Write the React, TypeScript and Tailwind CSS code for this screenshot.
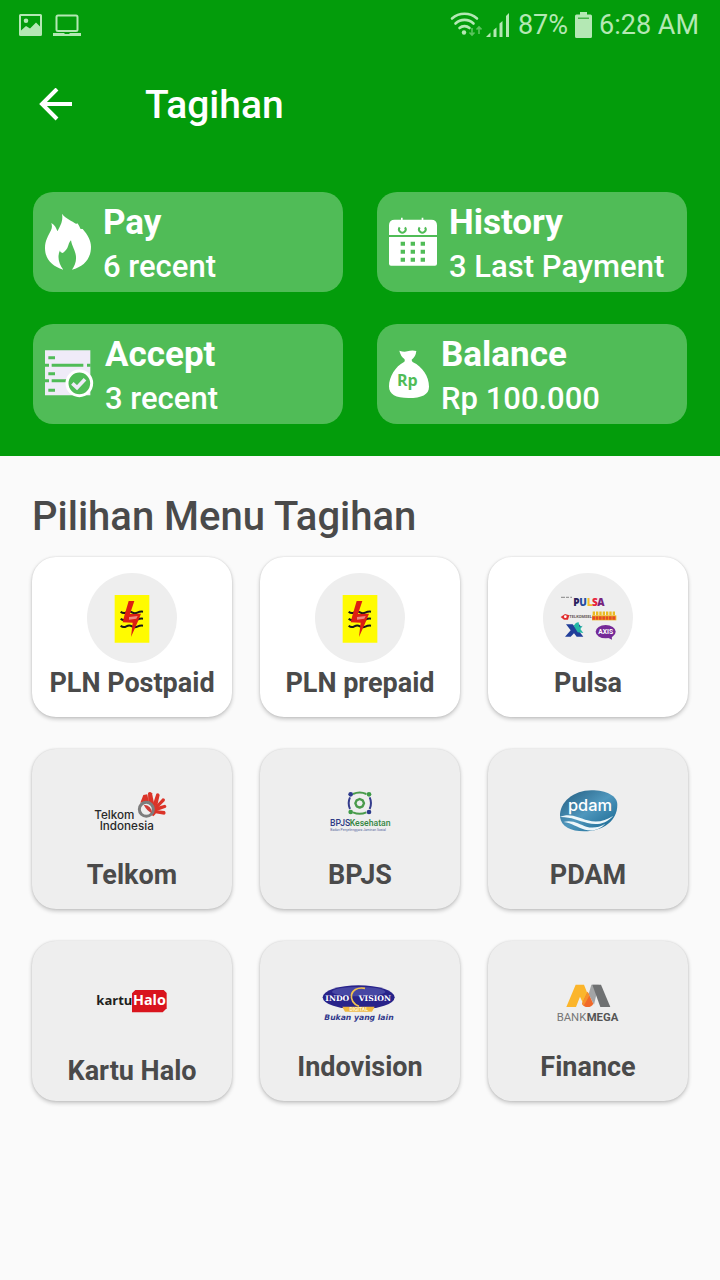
import type { ReactNode } from "react";

function StatusBar() {
  return (
    <div className="flex h-[50px] items-center justify-between pl-[18px] pr-[21px] text-[#b4e8b4]">
      <div className="flex items-center gap-[10px]">
        <svg className="h-[24px] w-[25px]" viewBox="0 0 25 24" aria-label="Image saved">
          <path
            fill="currentColor"
            fillRule="evenodd"
            d="M2.500 1h20a1.500 1.500 0 0 1 1.500 1.500v19a1.500 1.500 0 0 1-1.500 1.500h-20A1.500 1.500 0 0 1 1 21.500v-19A1.500 1.500 0 0 1 2.500 1ZM3 3v14.500l5-4.500 4 2.500 6-6 4 4V3ZM8 5.500a2.300 2.300 0 1 1 0 4.600 2.300 2.300 0 0 1 0-4.600Z"
          />
        </svg>
        <svg className="h-[24px] w-[28px]" viewBox="0 0 28 24" aria-label="Connected to computer">
          <rect x="3.500" y="2.500" width="21" height="15.500" rx="1.500" fill="none" stroke="currentColor" strokeWidth="2" />
          <path fill="currentColor" d="M0 20h11l1 1h4l1-1h11v3H0Z" />
        </svg>
      </div>
      <div className="flex items-center text-[27px] leading-8">
        <svg className="mr-[4px] h-[28px] w-[32px]" viewBox="0 0 32 28" aria-label="Wi-Fi">
          <g fill="none" stroke="currentColor" strokeWidth="2.600" strokeLinecap="round">
            <path d="M2 7.500a19 19 0 0 1 25 0" />
            <path d="M5.500 12.500a13 13 0 0 1 18 0" />
            <path d="M9.500 17a7.500 7.500 0 0 1 10 0" />
          </g>
          <circle cx="14" cy="21.500" r="2.200" fill="currentColor" />
          <g fill="none" stroke="#5cc45f" strokeWidth="1.600">
            <path d="M22 17v7m-2.500-2.500L22 24l2.500-2.500" />
            <path d="M29 23v-7m-2.500 2.500L29 16l2.500 2.500" />
          </g>
        </svg>
        <svg className="mr-[8px] h-[26px] w-[24px]" viewBox="0 0 24 26" aria-label="Signal" fill="currentColor">
          <path d="M0 25l4.500-4.500V25Z" />
          <path d="M7.500 18l3-2.500V25h-3Z" />
          <path d="M13.500 11.500l3-2.500v16h-3Z" />
          <path d="M20 4l3-3v24h-3Z" />
        </svg>
        <span>87%</span>
        <svg className="mx-[7px] h-[26px] w-[17px]" viewBox="0 0 17 26" aria-label="Battery">
          <path fill="currentColor" d="M5 0h7v2.500h3.500A1.500 1.500 0 0 1 17 4v20.500a1.500 1.500 0 0 1-1.500 1.500h-14A1.500 1.500 0 0 1 0 24.500V4a1.500 1.500 0 0 1 1.500-1.500H5Z" />
          <path fill="#45b549" d="M3 5.500h11V7H3Z" />
        </svg>
        <span>6:28 AM</span>
      </div>
    </div>
  );
}

const FireIcon = (
  <svg className="h-[58px] w-[48px] shrink-0" viewBox="0 0 144 174" fill="#fff" aria-hidden="true">
    <path d="M54 2c10 14 30 22 43 31 1-1 2-2 2-3 5 5 8 11 10 17 3 1 5 1 7 1 15 17 25 36 25 53 0 36-21 60-57 69 8-12 13-24 12-38-1-19-12-31-15-50-6 4-7 15-11 23-4 7-8 11-14 15-6-1-8-4-8-8-9 19-4 40 10 58C22 159 3 137 3 104c0-20 10-36 18-52 4-9 3-14 1-22 11 6 15 15 18 25 9-17 18-31 14-53Z" />
  </svg>
);

const CalendarIcon = (
  <svg className="h-[50px] w-[50px] shrink-0" viewBox="0 0 150 150" aria-hidden="true">
    <path fill="#fff" d="M20 8h19V2h5v6h57V2h5v6h24q17 0 17 17v29H3V25Q3 8 20 8ZM3 60h144v80q0 6-6 6H9q-6 0-6-6Z" />
    <g fill="none" stroke="#50bc57" strokeWidth="6">
      <path d="M35 31a10 10 0 1 0 16 0M95 31a10 10 0 1 0 16 0" />
    </g>
    <path
      fill="#50bc57"
      d="M38 74h13v12H38ZM68 74h13v12H68ZM98 74h13v12H98ZM38 98h13v12H38ZM68 98h13v12H68ZM98 98h13v12H98ZM38 122h13v12H38ZM68 122h13v12H68ZM98 122h13v12H98Z"
    />
  </svg>
);

const ChecklistIcon = (
  <svg className="h-[49px] w-[50px] shrink-0" viewBox="0 0 150 147" aria-hidden="true">
    <path fill="#efebf8" d="M3 1h136v135H3Z" />
    <g fill="#50bc57">
      <path d="M13 19h20v9H13ZM13 67h20v9H13ZM13 116h20v9H13Z" />
      <path d="M0 41h15v9H0ZM23 41h95v9H23ZM129 41h11v9h-11ZM0 88h15v9H0ZM23 88h52v9H23Z" />
    </g>
    <circle cx="106" cy="100" r="37" fill="#50bc57" stroke="#fff" strokeWidth="9" />
    <path fill="none" stroke="#efebf8" strokeWidth="11" d="m85 100 14 13 24-25" />
  </svg>
);

const MoneyBagIcon = (
  <svg className="h-[50px] w-[42px] shrink-0" viewBox="0 0 126 150" aria-hidden="true">
    <path fill="#fff" d="M34 5q14 5 24 2 14-4 27-1-2 18-14 26 0 5 4 8c28 13 48 42 48 73 0 24-22 34-61 34S3 137 3 112c0-28 19-60 45-73 3-2 3-6 1-9Q38 22 34 5Z" />
    <text x="58" y="112" textAnchor="middle" fill="#50bc57" className="font-[Open_Sans] text-[48px] font-bold">
      Rp
    </text>
  </svg>
);

const PlnLogo = (
  <svg className="size-[90px]" viewBox="0 0 270 270" aria-hidden="true">
    <circle cx="135" cy="135" r="135" fill="#eee" />
    <path fill="#fffb00" d="M83 66h104v143H83Z" />
    <g fill="none" stroke="#191919" strokeWidth="6">
      <path d="M101 116q8 7 17 2t17 0 16 1 17-3M101 137q8 7 17 2t17 0 16 1 17-3M101 158q8 7 17 2t17 0 16 1 17-3" />
    </g>
    <path fill="#dd1f12" d="M125 84h17l-13 39 33-1-11 27-19 43 5-43-30-1 5-20Z" />
    <path fill="#ee8a80" d="m126 132 26-3-4 8-22 3Z" />
  </svg>
);

const PulsaLogo = (
  <svg className="size-[90px]" viewBox="0 0 270 270" aria-hidden="true">
    <circle cx="135" cy="135" r="135" fill="#eee" />
    <path stroke="#9a9a9a" strokeWidth="4" strokeDasharray="12 3 9 4" d="M54 73h33" />
    <g className="font-[Open_Sans] text-[30px] font-extrabold">
      <text x="91" y="98" fill="#29205d">P</text>
      <text x="109" y="98" fill="#244c9d">U</text>
      <text x="132" y="98" fill="#f5bd2c">L</text>
      <text x="147" y="98" fill="#e8243a">S</text>
      <text x="163" y="98" fill="#76237d">A</text>
    </g>
    <path fill="#e02c2c" d="m53 132 13-9 13 4-4 13H63Z" />
    <circle cx="67" cy="131" r="4" fill="#fff" />
    <text x="79" y="136" fill="#665a5a" className="text-[12px] font-bold">TELKOMSEL</text>
    <path stroke="#ebbb23" strokeWidth="11" strokeDasharray="7 3" d="M149 121h70" />
    <path fill="#f0b51c" d="M147 127h73v15h-73Z" />
    <path stroke="#e44927" strokeWidth="11" strokeDasharray="8 2" d="M148 135h71" />
    <path fill="#213e9a" d="M69 154h20l9 10 10-10 7 8-9 10 15 19h-20l-8-10-10 10H66l17-19Z" />
    <path fill="#25b8a5" d="M92 158q8-12 15-10l2 13 10-3-7 10 9 12-17-2Z" />
    <ellipse cx="188" cy="176" rx="30" ry="20" fill="#752a98" />
    <path fill="#752a98" d="m192 193 15 7-1-15Z" />
    <text x="188" y="184" textAnchor="middle" fill="#fff" className="text-[20px] font-bold">AXIS</text>
  </svg>
);

const TelkomLogo = (
  <svg className="h-[60px] w-[95px]" viewBox="0 0 285 180" aria-hidden="true">
    <g fill="#db3328">
      <path d="M166 68l9-23 12-2 4 22Z" />
      <path d="M190 68 189 39q6-6 12 1l7 34Z" />
      <path d="m204 72 10-31q8-3 10 4l-8 35Z" />
      <path d="m212 77 21-22q9 0 6 8l-24 24Z" />
      <path d="m212 82 28-8q7 4 2 9l-29 11Z" />
      <path d="m208 90 31 3q6 7-1 11l-31-5Z" />
      <path d="M164 74q20-18 48 0 9 22-7 35Z" />
    </g>
    <circle cx="184" cy="88" r="21" fill="#eee" stroke="#7d7d7d" strokeWidth="9" />
    <path fill="#ce3c37" d="M176 74q25 2 24 25-14-6-24-25Z" />
    <text fill="#292929" className="font-[Inter] text-[35px] font-medium">
      <tspan x="28" y="117">Telkom</tspan>
      <tspan x="44" y="151">Indonesia</tspan>
    </text>
  </svg>
);

const BpjsLogo = (
  <svg className="h-[60px] w-[80px]" viewBox="0 0 240 180" aria-hidden="true">
    <g fill="none" strokeWidth="6">
      <path stroke="#4a9b4b" d="M99 42q20-9 40 0M99 97q20 9 40 0" />
      <path stroke="#343c8c" d="M90 52q-8 17 0 35M149 52q8 17 0 35" />
      <path stroke="#4a9b4b" strokeWidth="7" strokeLinejoin="round" d="m119 57 9 4 4 9-4 9-9 4-9-4-4-9 4-9Z" />
    </g>
    <g fill="#2d3a8b">
      <circle cx="92" cy="43" r="7" />
      <circle cx="147" cy="96" r="7" />
    </g>
    <g fill="#3f9b47">
      <circle cx="147" cy="43" r="7" />
      <circle cx="92" cy="96" r="7" />
    </g>
    <text x="30" y="138" fill="#2f3a85" className="text-[26px] font-medium">BPJS</text>
    <text x="89" y="138" fill="#338642" className="text-[26px] font-medium">Kesehatan</text>
    <text x="31" y="152" fill="#5768a0" className="text-[10px]">Badan Penyelenggara Jaminan Sosial</text>
  </svg>
);

const PdamLogo = (
  <svg className="h-[60px] w-[80px]" viewBox="-6 0 240 180" aria-hidden="true">
    <defs>
      <linearGradient id="water" x1="0" y1="0" x2="1" y2="1">
        <stop offset="0" stopColor="#225b7e" />
        <stop offset="0.500" stopColor="#4f97bd" />
        <stop offset="1" stopColor="#12628c" />
      </linearGradient>
    </defs>
    <path fill="url(#water)" d="M30 111C27 66 72 31 124 31c46 0 78 17 78 43 0 47-40 79-100 80-39 0-69-15-72-43Z" />
    <path fill="#eef7fa" d="M29 111c32-14 57 3 84 10 28 8 52 2 77-14-22 25-49 29-78 22-27-7-50-19-83-18Z" />
    <path fill="#edf6fa" d="M41 126c26-8 48 8 68 14 18 5 38 3 57-9-16 18-39 24-61 18-23-6-40-20-64-23Z" />
    <text x="54" y="93" fill="#fff" className="font-[Inter] text-[49px] font-medium">pdam</text>
  </svg>
);

const KartuHaloLogo = (
  <svg className="h-[58px] w-[95px]" viewBox="0 0 285 174" aria-hidden="true">
    <path fill="#d9141d" d="M151 45h85l9 9v46l-12 12h-92V55Z" />
    <text x="34" y="91" fill="#211f20" className="font-[Open_Sans] text-[39px] font-bold">kartu</text>
    <text x="144" y="91" fill="#fff" className="font-[Open_Sans] text-[43px] font-bold">Halo</text>
  </svg>
);

const IndovisionLogo = (
  <svg className="h-[55px] w-[90px]" viewBox="0 0 270 165" aria-hidden="true">
    <ellipse cx="131" cy="67" rx="108" ry="36" fill="#28238a" />
    <ellipse cx="131" cy="50" rx="80" ry="14" fill="#4747a4" />
    <path fill="none" stroke="#f1c24e" strokeWidth="5" d="M150 40c-50-8-52 42-18 54" />
    <g fill="#fff" className="font-[DejaVu_Serif] text-[23px] font-bold">
      <text x="31" y="77">INDO</text>
      <text x="131" y="77">VISION</text>
    </g>
    <path fill="#eeb63e" d="M82 95h97l-8 15H90Z" />
    <text x="131" y="108" textAnchor="middle" fill="#fff5d5" className="text-[15px] font-bold">DIGITAL</text>
    <text x="28" y="134" fill="#31388b" className="font-[DejaVu_Sans] text-[23px] font-bold italic">Bukan yang lain</text>
  </svg>
);

const BankMegaLogo = (
  <svg className="h-[55px] w-[85px]" viewBox="0 0 255 165" aria-hidden="true">
    <path fill="#a3a5a6" d="M136 29h22l-14 60-16-32Z" />
    <path fill="#6f7172" d="M139 29h26l28 67h-30Z" />
    <path fill="#fbb52b" d="M89 29h25l11 28-14 28-9-20-12 31H61Z" />
    <path fill="#f0692a" d="m125 50 17 36q-5 10-17 10t-17-10Z" />
    <path fill="#f6912c" d="m125 50-17 36 5 6 17-30Z" />
    <text x="32" y="138" fill="#777" className="text-[34px]">BANK</text>
    <text x="122" y="138" fill="#555" className="text-[34px] font-bold">MEGA</text>
  </svg>
);

type Summary = { title: string; detail: string; icon: ReactNode };

const summaries: Summary[] = [
  { title: "Pay", detail: "6 recent", icon: FireIcon },
  { title: "History", detail: "3 Last Payment", icon: CalendarIcon },
  { title: "Accept", detail: "3 recent", icon: ChecklistIcon },
  { title: "Balance", detail: "Rp 100.000", icon: MoneyBagIcon },
];

function SummaryTile({ title, detail, icon }: Summary) {
  return (
    <button className="flex h-[100px] items-center gap-[11px] rounded-[20px] bg-[#50bc57] pl-[11px] text-left text-white">
      {icon}
      <span className="flex flex-col pt-[6px]">
        <span className="text-[35px] leading-[44px] font-bold">{title}</span>
        <span className="text-[31px] leading-[44px] font-medium">{detail}</span>
      </span>
    </button>
  );
}

type Biller = { name: string; logo: ReactNode; surface: string; logoHeight: string };

const billers: Biller[] = [
  { name: "PLN Postpaid", logo: PlnLogo, surface: "bg-white", logoHeight: "h-[90px]" },
  { name: "PLN prepaid", logo: PlnLogo, surface: "bg-white", logoHeight: "h-[90px]" },
  { name: "Pulsa", logo: PulsaLogo, surface: "bg-white", logoHeight: "h-[90px]" },
  { name: "Telkom", logo: TelkomLogo, surface: "bg-[#eee]", logoHeight: "h-[90px]" },
  { name: "BPJS", logo: BpjsLogo, surface: "bg-[#eee]", logoHeight: "h-[90px]" },
  { name: "PDAM", logo: PdamLogo, surface: "bg-[#eee]", logoHeight: "h-[90px]" },
  { name: "Kartu Halo", logo: KartuHaloLogo, surface: "bg-[#eee]", logoHeight: "h-[94px]" },
  { name: "Indovision", logo: IndovisionLogo, surface: "bg-[#eee]", logoHeight: "h-[90px]" },
  { name: "Finance", logo: BankMegaLogo, surface: "bg-[#eee]", logoHeight: "h-[90px]" },
];

function BillerCard({ name, logo, surface, logoHeight }: Biller) {
  return (
    <button
      className={`flex h-[160px] flex-col items-center rounded-[24px] pt-4 shadow-[0_2px_4px_rgba(0,0,0,0.22),0_0_2px_rgba(0,0,0,0.12)] ${surface}`}
    >
      <span className={`flex items-center justify-center ${logoHeight}`}>{logo}</span>
      <span className="mt-1 text-[27px] leading-8 font-bold whitespace-nowrap">{name}</span>
    </button>
  );
}

export default function App() {
  return (
    <div className="min-h-screen bg-[#fafafa] font-[Roboto,sans-serif] text-[#4a4a4a]">
      <header className="bg-[#039c0b] pb-8">
        <StatusBar />
        <div className="flex h-[110px] items-center gap-[72px] pl-[39px] text-white">
          <button aria-label="Back">
            <svg className="h-[34px] w-[34px]" viewBox="0 0 34 34" fill="none" stroke="currentColor" strokeWidth="4">
              <path d="M33 16H4M18 1 3 16l15 15" />
            </svg>
          </button>
          <h1 className="text-[39px] leading-[48px] font-medium">Tagihan</h1>
        </div>
        <div className="mt-8 grid grid-cols-2 gap-x-[34px] gap-y-8 px-[33px]">
          {summaries.map((item) => (
            <SummaryTile key={item.title} {...item} />
          ))}
        </div>
      </header>
      <main className="px-8 pt-[37px] pb-8">
        <h2 className="text-[40px] leading-[48px] font-medium">Pilihan Menu Tagihan</h2>
        <div className="mt-4 grid grid-cols-3 gap-x-7 gap-y-8">
          {billers.map((item) => (
            <BillerCard key={item.name} {...item} />
          ))}
        </div>
      </main>
    </div>
  );
}
